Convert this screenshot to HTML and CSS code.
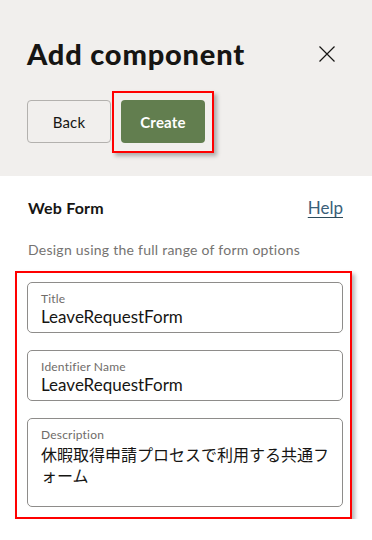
FILE: index.html
```html
<!DOCTYPE html>
<html lang="en">
<head>
    <meta charset="UTF-8">
    <meta name="viewport" content="width=device-width, initial-scale=1.0">
    <title>Add component</title>
    <link rel="stylesheet" href="styles.css">
</head>
<body>
    <div class="panel">
        <div class="panel-header">
            <div class="title-row">
                <h1>Add component</h1>
                <button class="close-btn" aria-label="Close">
                    <svg width="16" height="16" viewBox="0 0 16 16">
                        <path d="M0.5 0.5 L15.5 15.5 M15.5 0.5 L0.5 15.5" stroke="#161513" stroke-width="1.2" fill="none"/>
                    </svg>
                </button>
            </div>
            <div class="actions">
                <button class="btn btn-outline">Back</button>
                <span class="highlight">
                    <button class="btn btn-primary">Create</button>
                </span>
            </div>
        </div>

        <div class="panel-body">
            <div class="section-row">
                <h2>Web Form</h2>
                <a href="#" class="help-link">Help</a>
            </div>
            <p class="section-desc">Design using the full range of form options</p>

            <div class="form-box">
                <div class="field">
                    <label>Title</label>
                    <div class="field-value">LeaveRequestForm</div>
                </div>
                <div class="field">
                    <label>Identifier Name</label>
                    <div class="field-value">LeaveRequestForm</div>
                </div>
                <div class="field field-area">
                    <label>Description</label>
                    <div class="field-value cjk">休暇取得申請プロセスで利用する共通フォーム</div>
                </div>
            </div>
        </div>
    </div>
</body>
</html>
```

FILE: styles.css
```css
body {
    margin: 0;
    padding: 0;
    font-family: Lato, "Noto Sans CJK JP", sans-serif;
    color: #161513;
    background: #fff;
}

.panel {
    width: 372px;
}

.panel-header {
    background-color: #f1efed;
    padding: 36px 29px 33px 27px;
}

.title-row {
    display: flex;
    justify-content: space-between;
    align-items: center;
}

h1 {
    margin: 0;
    font-size: 29px;
    line-height: 36px;
    font-weight: 900;
    letter-spacing: 0.8px;
}

.close-btn {
    background: none;
    border: none;
    padding: 0;
    margin-right: 8px;
    width: 16px;
    height: 16px;
    display: flex;
    cursor: pointer;
}

.actions {
    display: flex;
    align-items: center;
    margin-top: 28px;
}

.btn {
    width: 84px;
    height: 43px;
    border-radius: 4px;
    font-family: Lato, sans-serif;
    font-size: 15px;
    letter-spacing: 0.2px;
    cursor: pointer;
}

.btn-outline {
    background: transparent;
    border: 1px solid #b3b1ae;
    color: #161513;
}

.btn-primary {
    background-color: #627e4f;
    border: none;
    color: #fff;
    font-weight: 700;
}

.highlight {
    display: flex;
    margin: -9px 0 -10px 1px;
    padding: 7px 7px 8px 7px;
    border: 2px solid #ff0000;
    box-shadow: 3px 3px 4px rgba(0, 0, 0, 0.28);
}

.panel-body {
    padding: 20px 29px 0 27px;
}

.section-row {
    display: flex;
    justify-content: space-between;
    align-items: baseline;
    padding-left: 1px;
}

h2 {
    margin: 0;
    font-size: 16px;
    line-height: 24px;
    font-weight: 700;
    letter-spacing: 0.2px;
}

.help-link {
    font-size: 17px;
    font-weight: 400;
    color: #3a6079;
    text-decoration: underline;
    text-decoration-color: #2d4a5a;
    text-underline-offset: 3px;
}

.section-desc {
    margin: 20px 0 0 1px;
    font-size: 14px;
    line-height: 20px;
    letter-spacing: 0.25px;
    color: #757371;
}

.form-box {
    margin: 11px -9px 0 -12px;
    padding: 9px 7px 10px 10px;
    border: 2px solid #ff0000;
    box-shadow: 3px 3px 4px rgba(0, 0, 0, 0.28);
    display: flex;
    flex-direction: column;
    gap: 17px;
}

.field {
    border: 1px solid #8e8c8a;
    border-radius: 5px;
    padding: 8px 13px 5px 13px;
}

.field label {
    display: block;
    font-size: 12px;
    line-height: 15px;
    letter-spacing: 0.2px;
    color: #6f6c69;
}

.field-value {
    font-size: 17px;
    line-height: 21px;
    color: #161513;
}

.field-area {
    min-height: 74px;
}

.field-area .field-value {
    margin-top: 2px;
    font-size: 16px;
    line-height: 21px;
}

.cjk {
    font-family: "Noto Sans CJK JP", sans-serif;
}
```
